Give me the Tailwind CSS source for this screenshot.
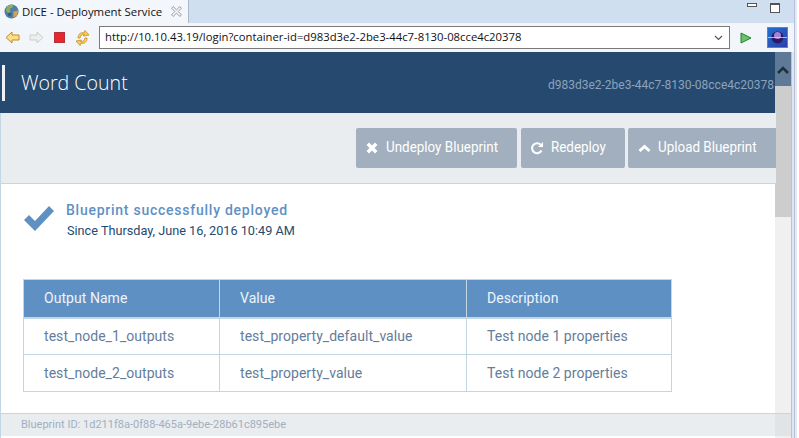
<!DOCTYPE html>
<html lang="en">
<head>
    <meta charset="UTF-8">
    <title>DICE - Deployment Service</title>
    <script src="https://cdn.jsdelivr.net/npm/@tailwindcss/browser@4"></script>
</head>
<body class="flex w-[799px] h-[438px] overflow-hidden bg-white font-['Roboto',sans-serif]">

<div class="w-[794px] shrink-0 bg-[#dde6f2]">
<!-- Tab strip -->
<div class="flex h-[23px] justify-between bg-[#cfdfef]">
    <div class="flex items-center w-[189px] h-[23px] bg-[#f3f6fb] pl-[4px] border-r border-[#a9b8c8] font-['Open_Sans',sans-serif] text-[11.400px] text-[#111]">
        <svg class="w-[15px] h-[15px] shrink-0" viewBox="0 0 16 16">
            <circle cx="8" cy="8" r="7.500" fill="#4f7fa8"/>
            <path d="M3 3c2-2 5-3 7-2l-1 3-3 1 1 3-2 2-3-3z" fill="#8fae5a"/>
            <path d="M10 8l5-1-1 5-4 3z" fill="#d3a24a"/>
            <circle cx="6" cy="11" r="2" fill="#2f5f90"/>
        </svg>
        <span class="ml-[3px] whitespace-nowrap">DICE - Deployment Service</span>
        <svg class="w-[11px] h-[11px] ml-[9px] shrink-0" viewBox="0 0 10 10" fill="#f3f6fb" stroke="#8a8f94" stroke-width=".8">
            <path d="M.5 2L2 .5l3 3 3-3L9.500 2l-3 3 3 3L8 9.500l-3-3-3 3L.5 8l3-3z"/>
        </svg>
    </div>
    <div class="flex items-start gap-[13px] pr-[14px] pt-[3px]">
        <div class="w-[10px] h-[4px] border border-[#555] bg-white"></div>
        <div class="w-[10px] h-[10px] border border-[#555] border-t-2 bg-white"></div>
    </div>
</div>

<!-- Browser toolbar -->
<div class="flex items-center h-[29px] bg-[#f2f5fa] pl-[5px]">
    <svg class="w-[15px] h-[13px]" viewBox="0 0 15 13"><path d="M7 1L1 6.500 7 12V9h7V4H7z" fill="#fbe08a" stroke="#c98a1a"/></svg>
    <svg class="w-[15px] h-[13px] ml-[9px]" viewBox="0 0 15 13"><path d="M8 1l6 5.500L8 12V9H1V4h7z" fill="#eee" stroke="#ccc"/></svg>
    <div class="w-[11px] h-[11px] ml-[10px] bg-[#e8262f] border border-[#b5323a]"></div>
    <svg class="w-[15px] h-[16px] ml-[10px]" viewBox="0 0 15 16" fill="#f7cf5f" stroke="#c98a1a" stroke-width=".8">
        <path d="M3 8C3 4 6 2 9 3l1-2.500 4 4.500-5.500 1 .7-1.800C7 4 5.500 5.500 5 8z"/>
        <path d="M12 8c0 4-3 6-6 5l-1 2.500L1 11l5.500-1-.7 1.800C8 12 9.500 10.500 10 8z"/>
    </svg>
    <div class="flex items-center justify-between w-[631px] h-[23px] ml-[9px] bg-white border border-[#7a7a7a] pl-[5px] pr-[6px] font-['Open_Sans',sans-serif] text-[11.300px] text-[#111]">
        <span>http://10.10.43.19/login?container-id=d983d3e2-2be3-44c7-8130-08cce4c20378</span>
        <svg class="w-[9px] h-[6px]" viewBox="0 0 9 6" fill="none" stroke="#555" stroke-width="1.200"><path d="M1 1l3.500 3.500L8 1"/></svg>
    </div>
    <svg class="w-[12px] h-[12px] ml-[10px]" viewBox="0 0 12 12"><path d="M1 1l10 5-10 5z" fill="#6cc067" stroke="#23803a"/></svg>
    <div class="w-[21px] h-[21px] ml-[15px] flex items-center justify-center bg-gradient-to-br from-[#1f6fd0] to-[#2a3fa8] border border-[#4b8ad0]">
        <svg class="w-[19px] h-[15px]" viewBox="0 0 19 15">
            <circle cx="9.500" cy="7.500" r="6" fill="#2a1a66"/>
            <circle cx="9.500" cy="5.500" r="3.500" fill="#a583d6"/>
            <path d="M0 7.500h19" stroke="#dcd3f5" stroke-width=".8"/>
        </svg>
    </div>
</div>

<!-- Page area with scrollbar -->
<div class="flex h-[386px]">
    <div class="flex w-[792px] shrink-0 border-r border-[#b9c4d0]">
        <main class="w-[775px] flex flex-col bg-white border-l border-[#c3d6e4]">
            <header class="flex items-center justify-between h-[61px] -ml-px bg-[#26496f]">
                <div class="flex items-center h-[36px] border-l-[3px] border-[#eef2f6] ml-[2px] pl-[16px] mt-[1px] font-['Open_Sans',sans-serif] text-[19.600px] font-light text-white">Word Count</div>
                <div class="text-[12px] text-[#8ca3bb] mt-[5px] pr-px">d983d3e2-2be3-44c7-8130-08cce4c20378</div>
            </header>

            <div class="flex justify-end h-[71px] pt-[15px] -mr-px bg-[#e9edf0] border-b border-[#c3d6e4] relative">
                <div class="flex items-center w-[161px] h-[40px] pl-[10px] rounded-[2px] bg-[#a2afbe] text-[15.500px] text-white overflow-hidden">
                    <svg class="w-[12px] h-[12px] mr-[8px] shrink-0" viewBox="0 0 12 12"><path d="M.5 3l2.500-2.500L6 3.500 9 .5 11.500 3l-3 3 3 3L9 11.500l-3-3-3 3L.5 9l3-3z" fill="#fff"/></svg>
                    <span class="scale-x-[.865] origin-left whitespace-nowrap">Undeploy Blueprint</span>
                </div>
                <div class="flex items-center w-[104px] h-[40px] ml-[4px] pl-[9px] rounded-[2px] bg-[#a2afbe] text-[15.500px] text-white overflow-hidden">
                    <svg class="w-[14px] h-[14px] mr-[7px] shrink-0" viewBox="0 0 14 14" fill="none"><path d="M11.500 9.500A5 5 0 1 1 10.500 3.500" stroke="#fff" stroke-width="2"/><path d="M13 1v5H8z" fill="#fff"/></svg>
                    <span class="scale-x-[.865] origin-left whitespace-nowrap">Redeploy</span>
                </div>
                <div class="flex items-center w-[148px] h-[40px] ml-[3px] pl-[10px] rounded-l-[2px] bg-[#a2afbe] text-[15.500px] text-white overflow-hidden">
                    <svg class="w-[13px] h-[9px] mr-[7px] shrink-0" viewBox="0 0 13 9" fill="none"><path d="M1.500 7L6.500 2.500 11.500 7" stroke="#fff" stroke-width="3"/></svg>
                    <span class="scale-x-[.865] origin-left whitespace-nowrap">Upload Blueprint</span>
                </div>
            </div>

            <section class="flex-1 pl-[23px]">
                <div class="flex pt-[16px]">
                    <svg class="w-[31px] h-[26px] mt-[5px]" viewBox="0 0 31 26"><path d="M0 15l5-5 6 6L25 1l5 5-19 20z" fill="#5f90c4"/></svg>
                    <div class="ml-[12px]">
                        <div class="-ml-px text-[14px] leading-[20px] font-medium tracking-[0.75px] text-[#5f90c4]">Blueprint successfully deployed</div>
                        <div class="text-[12.700px] leading-[20px] text-[#26496f] mt-px">Since Thursday, June 16, 2016 10:49 AM</div>
                    </div>
                </div>

                <table class="mt-[38px] -ml-px w-[649px] table-fixed border-collapse text-[14px] tracking-[0.05px]">
                    <thead>
                        <tr class="h-[38px] bg-[#5f90c4] text-[#eef4fa] text-left">
                            <th class="w-[196px] pl-[20px] font-normal border border-[#c3d6e4] border-b-[2px]">Output Name</th>
                            <th class="w-[247px] pl-[20px] font-normal border border-[#c3d6e4] border-b-[2px]">Value</th>
                            <th class="pl-[20px] font-normal border border-[#c3d6e4] border-b-[2px]">Description</th>
                        </tr>
                    </thead>
                    <tbody class="text-[#647d9a]">
                        <tr class="h-[37px]">
                            <td class="pl-[20px] border border-[#c3d6e4]">test_node_1_outputs</td>
                            <td class="pl-[20px] border border-[#c3d6e4]">test_property_default_value</td>
                            <td class="pl-[20px] border border-[#c3d6e4]">Test node 1 properties</td>
                        </tr>
                        <tr class="h-[37px]">
                            <td class="pl-[20px] border border-[#c3d6e4]">test_node_2_outputs</td>
                            <td class="pl-[20px] border border-[#c3d6e4]">test_property_value</td>
                            <td class="pl-[20px] border border-[#c3d6e4]">Test node 2 properties</td>
                        </tr>
                    </tbody>
                </table>
            </section>

            <footer class="h-[23px] pl-[20px] mb-[2px] bg-[#e9edf0] border-t border-[#c3d6e4] text-[11px] leading-[22px] text-[#a2afbe]">Blueprint ID: 1d211f8a-0f88-465a-9ebe-28b61c895ebe</footer>
        </main>

        <!-- Scrollbar -->
        <div class="w-[16px] flex flex-col bg-[#f0f0f0]">
            <div class="flex items-center justify-center h-[34px] bg-[#5f7a96]">
                <svg class="w-[12px] h-[8px] mt-[1px]" viewBox="0 0 12 8" fill="none"><path d="M1 7l5-5 5 5" stroke="#1f2f3f" stroke-width="2.500"/></svg>
            </div>
            <div class="h-[131px] bg-[#cdcdcd]"></div>
            <div class="flex-1"></div>
            <div class="h-[23px] mb-[2px] bg-[#e0e4e6] border-t border-[#c3d6e4]"></div>
        </div>
    </div>
</div>
</div>

<!-- Window edge -->
<div class="w-[3px] shrink-0 bg-[#e6e8f6] border-l border-[#b8c0d8]"></div>
</body>
</html>
